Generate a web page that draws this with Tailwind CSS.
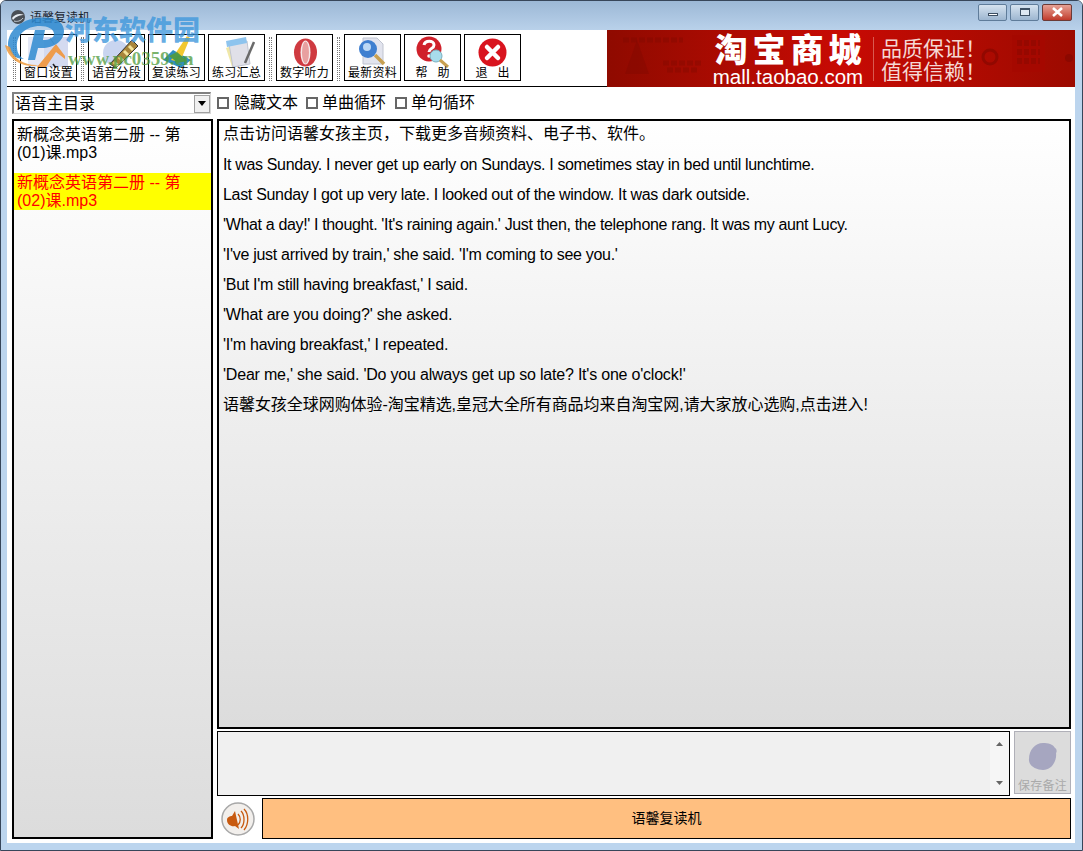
<!DOCTYPE html>
<html lang="zh-CN">
<head>
  <meta charset="UTF-8" />
  <title>语馨复读机</title>
  <script src="https://cdn.jsdelivr.net/npm/@tailwindcss/browser@4"></script>
</head>
<body class="w-[1083px] h-[851px] overflow-hidden font-['Liberation_Sans','Noto_Sans_CJK_SC',sans-serif] text-black">
  <div class="relative w-[1083px] h-[851px] flex flex-col rounded-t-[6px] border border-[#37465a] bg-[#bcd5ee] overflow-hidden">

    <!-- title bar -->
    <div class="h-[29px] shrink-0 flex items-center pl-[9px] pr-[7px] bg-gradient-to-b from-[#9cb8d6] to-[#b9d1ea]">
      <svg class="w-[16px] h-[16px] mt-[2px]" viewBox="0 0 16 16"><circle cx="8" cy="8" r="7" fill="#4a4f55"/><path d="M2 9c3-4 8-5 12-3-3 0-8 1-11 5z" fill="#e8edf2"/><path d="M4 12c3 1 7 0 9-3" stroke="#c8d0d8" fill="none"/></svg>
      <span class="ml-[4px] mt-[5px] text-[12px] leading-none text-[#1a2530]">语馨复读机</span>
      <div class="ml-auto flex gap-[3px] mb-[7px] mr-[3px]">
        <div class="w-[29px] h-[17px] flex items-center justify-center rounded-[2px] border border-[#5f7c9a] bg-gradient-to-b from-[#d6e3f0] to-[#9db6d0]"><span class="block w-[10px] h-[3px] mt-[5px] border border-[#3d4f63] bg-white"></span></div>
        <div class="w-[29px] h-[17px] flex items-center justify-center rounded-[2px] border border-[#5f7c9a] bg-gradient-to-b from-[#d6e3f0] to-[#9db6d0]"><span class="block w-[10px] h-[8px] border border-[#3d4f63] border-t-2 bg-[#dfe9f3]"></span></div>
        <div class="w-[30px] h-[17px] flex items-center justify-center rounded-[2px] border border-[#6b3a36] bg-gradient-to-b from-[#e5a095] to-[#c0392b]">
          <svg class="w-[13px] h-[10px]" viewBox="0 0 13 10"><path d="M2 1l9 8M11 1l-9 8" stroke="#fff" stroke-width="2.6"/></svg>
        </div>
      </div>
    </div>

    <!-- client area -->
    <div class="ml-[6px] mr-[7px] h-[813px] shrink-0 flex flex-col bg-white">

      <!-- toolbar and banner -->
      <div class="h-[57px] shrink-0 flex">
        <div class="w-[600px] h-[57px] border-b border-black flex items-start pt-[4px] pl-[6px]">
          <div class="w-[3px] h-[44px] mt-[3px] mr-[4px] border-x border-dotted border-[#777]"></div>
          <div class="relative w-[57px] h-[47px] border border-black flex flex-col items-center justify-end">
            <svg class="absolute left-[1px] top-[1px] w-[54px] h-[32px]" viewBox="0 0 54 32"><rect x="6" y="1" width="40" height="30" fill="#d4daf0"/><path d="M6 1h16v30H6z" fill="#e4e8f6"/><path d="M15 31L34 8l9 12v3L34 16 24 31z" fill="#ee9c4c"/><path d="M28 2l4 6" stroke="#999"/><path d="M31 28l3 4" stroke="#222" stroke-width="1.500"/></svg>
            <span class="relative text-[12px] leading-[14px] tracking-[0.2px]">窗口设置</span>
          </div>
          <div class="w-[3px] h-[44px] mt-[3px] mx-[4px] border-x border-dotted border-[#777]"></div>
          <div class="relative w-[57px] h-[47px] border border-black flex flex-col items-center justify-end">
            <svg class="absolute left-[13px] top-[1px] w-[38px] h-[32px]" viewBox="0 0 38 32"><circle cx="14" cy="17" r="13" fill="#c9d5f0"/><path d="M8 28L30 4l6 6-22 22z" fill="#a8853a" stroke="#333"/><path d="M12 26l4 4M17 21l4 4M22 15l4 4M27 10l4 4" stroke="#f3e39a" stroke-width="3"/></svg>
            <span class="relative text-[12px] leading-[14px] tracking-[0.2px]">语音分段</span>
          </div>
          <div class="relative w-[57px] h-[47px] ml-[3px] border border-black flex flex-col items-center justify-end">
            <svg class="absolute left-[10px] top-[1px] w-[38px] h-[32px]" viewBox="0 0 38 32"><path d="M4 24l10-10 18 10-10 8z" fill="#2f8fc0"/><path d="M12 24L28 0l3 2-10 24z" fill="#f2c830"/><path d="M10 20l9 7 9-2-10-9z" fill="#4f9a48"/></svg>
            <span class="relative text-[12px] leading-[14px] tracking-[0.2px]">复读练习</span>
          </div>
          <div class="relative w-[57px] h-[47px] ml-[3px] border border-black flex flex-col items-center justify-end">
            <svg class="absolute left-[12px] top-[1px] w-[36px] h-[32px]" viewBox="0 0 36 32"><path d="M5 12l6 19 16-5-6-20z" fill="#f0e8a8"/><path d="M8 8l18-3 3 23-17 3z" fill="#e0e0e8" stroke="#c0c4d0"/><path d="M5 5l20-4 1 6-20 4z" fill="#8ec4ee"/><path d="M24 27L33 6" stroke="#6a6a6a" stroke-width="2.500"/></svg>
            <span class="relative text-[12px] leading-[14px] tracking-[0.2px]">练习汇总</span>
          </div>
          <div class="w-[3px] h-[44px] mt-[3px] mx-[4px] border-x border-dotted border-[#777]"></div>
          <div class="relative w-[57px] h-[47px] border border-black flex flex-col items-center justify-end">
            <svg class="absolute left-[16px] top-[3px] w-[25px] h-[29px]" viewBox="0 0 25 29"><ellipse cx="12.500" cy="14.500" rx="11.500" ry="14" fill="#cf3a40"/><ellipse cx="12.500" cy="14.500" rx="5" ry="12" fill="#f6e8e8"/><ellipse cx="12.500" cy="14.500" rx="3.500" ry="11" fill="#e8a0a0"/></svg>
            <span class="relative text-[12px] leading-[14px] tracking-[0.2px]">数字听力</span>
          </div>
          <div class="w-[3px] h-[44px] mt-[3px] mx-[4px] border-x border-dotted border-[#777]"></div>
          <div class="relative w-[57px] h-[47px] border border-black flex flex-col items-center justify-end">
            <svg class="absolute left-[12px] top-[1px] w-[32px] h-[32px]" viewBox="0 0 32 32"><path d="M6 2h14l6 6v20H6z" fill="#e2e4ee" stroke="#c0c4d0"/><circle cx="11" cy="13" r="9" fill="#3f7fd0"/><circle cx="10" cy="11" r="4" fill="#bcd8f5"/><path d="M18 19l9 9" stroke="#c8a050" stroke-width="3.500"/></svg>
            <span class="relative text-[12px] leading-[14px] tracking-[0.2px]">最新资料</span>
          </div>
          <div class="relative w-[57px] h-[47px] ml-[3px] border border-black flex flex-col items-center justify-end">
            <svg class="absolute left-[11px] top-[1px] w-[34px] h-[32px]" viewBox="0 0 34 32"><circle cx="13" cy="13" r="12.500" fill="#d0212b"/><path d="M8 9c1-5 10-5 10 0 0 4-5 3-5 7" stroke="#fff" stroke-width="3" fill="none"/><circle cx="13" cy="20" r="1.800" fill="#fff"/><circle cx="20" cy="20" r="6" fill="#a8dcec" stroke="#7ab0c0"/><path d="M24 24l8 7" stroke="#c8a050" stroke-width="3"/></svg>
            <span class="relative text-[12px] leading-[14px] whitespace-pre">帮   助</span>
          </div>
          <div class="relative w-[57px] h-[47px] ml-[3px] border border-black flex flex-col items-center justify-end">
            <svg class="absolute left-[13px] top-[3px] w-[29px] h-[29px]" viewBox="0 0 29 29"><circle cx="14.500" cy="14.500" r="14" fill="#d9141e"/><path d="M9 9l11 11M20 9L9 20" stroke="#fff" stroke-width="4.500" stroke-linecap="round"/></svg>
            <span class="relative text-[12px] leading-[14px] whitespace-pre">退   出</span>
          </div>
        </div>
        <div class="relative w-[468px] h-[57px] flex items-center bg-gradient-to-r from-[#8f0a00] via-[#c80a04] to-[#9c0a00] text-white">
          <!-- faint ad art behind the text -->
          <svg class="absolute left-0 top-0 w-[468px] h-[57px]" viewBox="0 0 468 57"><path d="M30 10l-12 34h24z" fill="#7a0800" fill-opacity=".35"/><path d="M16 10h60M56 33h40M60 40h30" stroke="#7a0800" stroke-opacity=".35" stroke-width="5" stroke-dasharray="6 2"/><rect x="405" y="5" width="33" height="37" fill="#a50800"/><path d="M410 13h23M410 22h23M410 31h23" stroke="#960800" stroke-width="6" stroke-dasharray="5 2"/><circle cx="383" cy="27" r="7" fill="none" stroke="#920800" stroke-width="3"/><circle cx="462" cy="28" r="4" fill="#8c0800"/></svg>
          <div class="relative ml-[105px] w-[152px] flex flex-col items-center mt-[3px]">
            <span class="text-[33px] leading-[33px] font-black whitespace-nowrap tracking-[5px] pl-[5px]">淘宝商城</span>
            <span class="text-[20.500px] leading-[19px] whitespace-nowrap">mall.taobao.com</span>
          </div>
          <div class="relative w-px h-[44px] ml-[9px] bg-[#d85a50]"></div>
          <div class="relative ml-[7px] mt-[3px] flex flex-col text-[21px] leading-[23px] text-[#f5d8d4] whitespace-nowrap">
            <span>品质保证！</span>
            <span>值得信赖！</span>
          </div>
        </div>
      </div>

      <!-- directory row -->
      <div class="h-[32px] shrink-0 flex items-center pl-[5px] text-[16px]">
        <div class="w-[199px] h-[22px] flex items-center border-t-2 border-l-2 border-[#808080] border-b border-r border-b-[#d8d8d8] border-r-[#d8d8d8] bg-white">
          <span class="pl-[1px] leading-none">语音主目录</span>
          <div class="ml-auto w-[16px] h-[18px] flex items-center justify-center border border-[#a0a0a0] bg-[#f0f0f0]">
            <svg class="w-[8px] h-[5px]" viewBox="0 0 8 5"><path d="M0 0h8L4 5z" fill="#000"/></svg>
          </div>
        </div>
        <div class="ml-[6px] w-[12px] h-[12px] border-2 border-[#666]"></div>
        <span class="ml-[5px] leading-none">隐藏文本</span>
        <div class="ml-[8px] w-[12px] h-[12px] border-2 border-[#666]"></div>
        <span class="ml-[4px] leading-none">单曲循环</span>
        <div class="ml-[9px] w-[12px] h-[12px] border-2 border-[#666]"></div>
        <span class="ml-[4px] leading-none">单句循环</span>
      </div>

      <!-- main -->
      <div class="flex pl-[5px] gap-[4px]">
        <div class="w-[201px] h-[720px] border-2 border-black bg-gradient-to-b from-white to-[#dcdcdc] pt-[5px] text-[16px] leading-[18px]">
          <div class="pl-[3px] pr-[24px] mb-[11px]">新概念英语第二册 -- 第(01)课.mp3</div>
          <div class="pl-[3px] pr-[24px] pt-[1px] bg-[#ffff00] text-[#ff0000]">新概念英语第二册 -- 第(02)课.mp3</div>
        </div>
        <div class="w-[854px] flex flex-col">
          <div class="h-[610px] border-2 border-black bg-gradient-to-b from-white to-[#dcdcdc] pl-[4px] text-[16px] leading-[30px] overflow-hidden">
            <p class="-mt-[2px] mb-[1px]">点击访问语馨女孩主页，下载更多音频资料、电子书、软件。</p>
            <p class="tracking-[-0.35px]">It was Sunday. I never get up early on Sundays. I sometimes stay in bed until lunchtime.</p>
            <p class="tracking-[-0.31px]">Last Sunday I got up very late. I looked out of the window. It was dark outside.</p>
            <p class="tracking-[-0.35px]">'What a day!' I thought. 'It's raining again.' Just then, the telephone rang. It was my aunt Lucy.</p>
            <p class="tracking-[-0.29px]">'I've just arrived by train,' she said. 'I'm coming to see you.'</p>
            <p class="tracking-[-0.28px]">'But I'm still having breakfast,' I said.</p>
            <p class="tracking-[-0.2px]">'What are you doing?' she asked.</p>
            <p class="tracking-[-0.26px]">'I'm having breakfast,' I repeated.</p>
            <p class="tracking-[-0.21px]">'Dear me,' she said. 'Do you always get up so late? It's one o'clock!'</p>
            <p class="tracking-[-0.05px]">语馨女孩全球网购体验-淘宝精选,皇冠大全所有商品均来自淘宝网,请大家放心选购,点击进入!</p>
          </div>
          <div class="flex mt-[2px] h-[65px]">
            <div class="w-[793px] h-[65px] flex border border-black bg-[#f0f0f0]">
              <div class="ml-auto w-[19px] flex flex-col items-center justify-between py-[10px] bg-[#f6f6f6]">
                <svg class="w-[7px] h-[4px]" viewBox="0 0 7 4"><path d="M3.500 0L7 4H0z" fill="#666"/></svg>
                <svg class="w-[7px] h-[4px]" viewBox="0 0 7 4"><path d="M0 0h7L3.500 4z" fill="#666"/></svg>
              </div>
            </div>
            <div class="ml-[4px] w-[57px] h-[63px] flex flex-col items-center border border-[#b0b0b8] bg-[#dcdcdc]">
              <svg class="w-[32px] h-[30px] mt-[10px]" viewBox="0 0 32 30"><path d="M16 1c5 0 10 1 12 5 2 1 2 4 1 5 1 6-3 17-13 17C10 28 1 24 2 17 2 8 8 1 16 1z" fill="#a6a6c0"/></svg>
              <span class="text-[12px] leading-[14px] mt-[7px] text-[#aaa] tracking-[0.2px]">保存备注</span>
            </div>
          </div>
          <div class="flex items-center mt-[2px] h-[41px]">
            <svg class="w-[34px] h-[34px] ml-[4px]" viewBox="0 0 34 34"><circle cx="17" cy="17" r="16" fill="#f2efec" stroke="#a8a8a8" stroke-width="1.500"/><path d="M6 18c0-3 3-4 5-4l3-5 4 18-4-3c-3 1-8-1-8-6z" fill="#c85a10"/><path d="M17 12c3 3 3 8 0 11M20 9c4 4 4 13 0 17M23 7c5 5 5 15 0 21" stroke="#c85a10" stroke-width="1.300" fill="none"/></svg>
            <div class="ml-[7px] w-[809px] h-[41px] flex items-center justify-center border border-black bg-[#ffbf80] text-[14px] leading-none pb-[1px]">语馨复读机</div>
          </div>
        </div>
      </div>
    </div>

    <!-- watermark over the window -->
    <div class="absolute left-[3px] top-[12px] w-[204px] h-[62px] pointer-events-none">
      <svg class="absolute left-0 top-[2px] w-[64px] h-[54px]" viewBox="0 0 64 54"><path d="M4 30C4 12 24 0 46 3c8 1 14 6 14 13 0 10-10 17-22 17h-4l-3 12h-7l7-30h10l-2 10c6 0 11-2 11-6 0-5-6-8-14-8C22 11 12 20 13 32c0 6 3 10 7 12C11 44 4 38 4 30z" fill="#2e8ad0" fill-opacity=".85"/><path d="M1 30c3 14 18 24 34 20-14 1-26-6-29-18z" fill="#ee9a3c" fill-opacity=".85"/></svg>
      <span class="absolute left-[61px] top-[2px] text-[27px] leading-[32px] font-black text-[#3d97dc]/80 whitespace-nowrap">河东软件园</span>
      <span class="absolute left-[64px] top-[36px] font-['Liberation_Serif',serif] text-[19px] leading-[20px] font-bold text-[#4e9a3c]/75 whitespace-nowrap">www.pc0359.cn</span>
    </div>
  </div>
</body>
</html>
